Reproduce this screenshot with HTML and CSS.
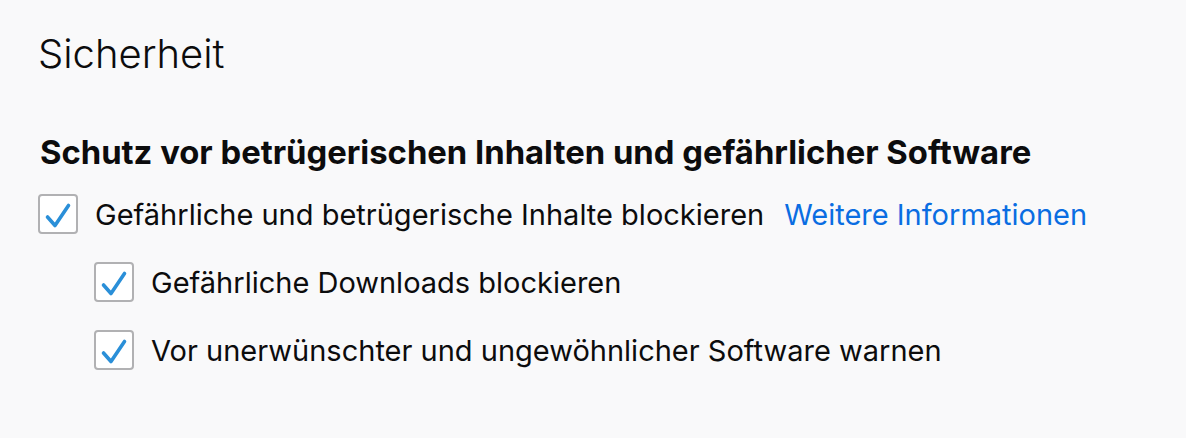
FILE: index.html
```html
<!DOCTYPE html>
<html lang="de">
<head>
<meta charset="utf-8">
<link rel="stylesheet" href="styles.css">
</head>
<body>
<main class="page">
  <h1 class="title">Sicherheit</h1>
  <h2 class="section">Schutz vor betrügerischen Inhalten und gefährlicher Software</h2>
  <div class="row">
    <span class="box"><svg viewBox="2 2 36 36" class="check"><path d="M9.5 23 L17 31.5 L30.5 11.5" /></svg></span>
    <span class="label">Gefährliche und betrügerische Inhalte blockieren</span>
    <a class="link" href="#">Weitere Informationen</a>
  </div>
  <div class="row sub">
    <span class="box"><svg viewBox="2 2 36 36" class="check"><path d="M9.5 23 L17 31.5 L30.5 11.5" /></svg></span>
    <span class="label">Gefährliche Downloads blockieren</span>
  </div>
  <div class="row sub">
    <span class="box"><svg viewBox="2 2 36 36" class="check"><path d="M9.5 23 L17 31.5 L30.5 11.5" /></svg></span>
    <span class="label">Vor unerwünschter und ungewöhnlicher Software warnen</span>
  </div>
</main>
</body>
</html>
```
FILE: styles.css
```css
html, body {
  margin: 0;
  background: #f9f9fa;
}
body {
  font-family: Inter, "Noto Sans", sans-serif;
  color: #0c0c0d;
}
.page {
  padding: 24px 0 0 38px;
}
.title {
  margin: 0;
  font-size: 40px;
  font-weight: 300;
  line-height: 60px;
}
.section {
  margin: 48px 0 0 2px;
  font-size: 32.8px;
  font-weight: 700;
  line-height: 40px;
}
.row {
  display: flex;
  align-items: center;
  height: 40px;
  margin-top: 22px;
}
.row.sub {
  margin-top: 28px;
  padding-left: 56px;
}
.box {
  box-sizing: border-box;
  width: 40px;
  height: 40px;
  border: 2px solid #b1b1b3;
  border-radius: 4px;
  background: #fff;
  display: flex;
  align-items: center;
  justify-content: center;
}
.check {
  width: 36px;
  height: 36px;
}
.check path {
  fill: none;
  stroke: #2a8fd8;
  stroke-width: 3.6;
  stroke-linecap: round;
  stroke-linejoin: round;
}
.label {
  margin-left: 17px;
  font-size: 29px;
}
.link {
  margin-left: 20px;
  font-size: 29px;
  color: #0a6de2;
  text-decoration: none;
}
```
